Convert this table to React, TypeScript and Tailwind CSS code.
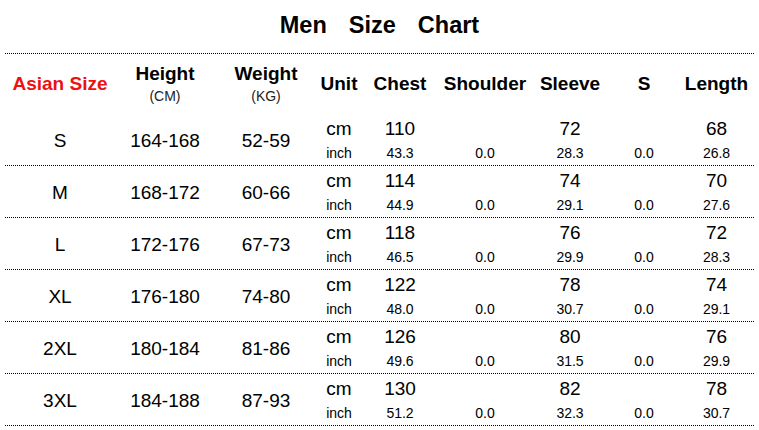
const ROWS = [
  { size: "S", height: "164-168", weight: "52-59", chest: ["110", "43.3"], sleeve: ["72", "28.3"], length: ["68", "26.8"] },
  { size: "M", height: "168-172", weight: "60-66", chest: ["114", "44.9"], sleeve: ["74", "29.1"], length: ["70", "27.6"] },
  { size: "L", height: "172-176", weight: "67-73", chest: ["118", "46.5"], sleeve: ["76", "29.9"], length: ["72", "28.3"] },
  { size: "XL", height: "176-180", weight: "74-80", chest: ["122", "48.0"], sleeve: ["78", "30.7"], length: ["74", "29.1"] },
  { size: "2XL", height: "180-184", weight: "81-86", chest: ["126", "49.6"], sleeve: ["80", "31.5"], length: ["76", "29.9"] },
  { size: "3XL", height: "184-188", weight: "87-93", chest: ["130", "51.2"], sleeve: ["82", "32.3"], length: ["78", "30.7"] },
];

const COLS = "grid grid-cols-[110px_100px_102px_44px_78px_92px_78px_70px_75px]";

function Pair({ top, bottom }: { top: string; bottom: string }) {
  return (
    <div className="flex flex-col items-center">
      <span className="h-[26px] leading-[30px] text-[19px]">{top}</span>
      <span className="h-[25px] leading-[27px] text-[14px]">{bottom}</span>
    </div>
  );
}

export default function App() {
  return (
    <div className="w-[759px] h-[430px] bg-white text-black font-['Liberation_Sans',Arial,sans-serif] px-[5px]">
      <div className="h-[54px] border-b border-dotted border-black flex items-center justify-center gap-[22px] text-[23.5px] font-bold pb-[2px]">
        <span>Men</span>
        <span>Size</span>
        <span>Chart</span>
      </div>

      {/* header */}
      <div className={`${COLS} h-[60px] items-center text-center text-[19px] font-bold`}>
        <div className="text-[#ee1111]">Asian Size</div>
        <div className="flex flex-col items-center pt-[1px]">
          <span className="leading-[22px]">Height</span>
          <span className="leading-[22px] text-[14px] font-normal text-[#222]">(CM)</span>
        </div>
        <div className="flex flex-col items-center pt-[1px]">
          <span className="leading-[22px]">Weight</span>
          <span className="leading-[22px] text-[14px] font-normal text-[#222]">(KG)</span>
        </div>
        <div>Unit</div>
        <div>Chest</div>
        <div>Shoulder</div>
        <div>Sleeve</div>
        <div>S</div>
        <div>Length</div>
      </div>

      {ROWS.map((r) => (
        <div key={r.size} className={`${COLS} h-[52px] border-b border-dotted border-black items-center text-center`}>
          <div className="text-[19px] pt-[4px]">{r.size}</div>
          <div className="text-[19px] pt-[4px]">{r.height}</div>
          <div className="text-[19px] pt-[4px]">{r.weight}</div>
          <Pair top="cm" bottom="inch" />
          <Pair top={r.chest[0]} bottom={r.chest[1]} />
          <Pair top="" bottom="0.0" />
          <Pair top={r.sleeve[0]} bottom={r.sleeve[1]} />
          <Pair top="" bottom="0.0" />
          <Pair top={r.length[0]} bottom={r.length[1]} />
        </div>
      ))}
    </div>
  );
}
